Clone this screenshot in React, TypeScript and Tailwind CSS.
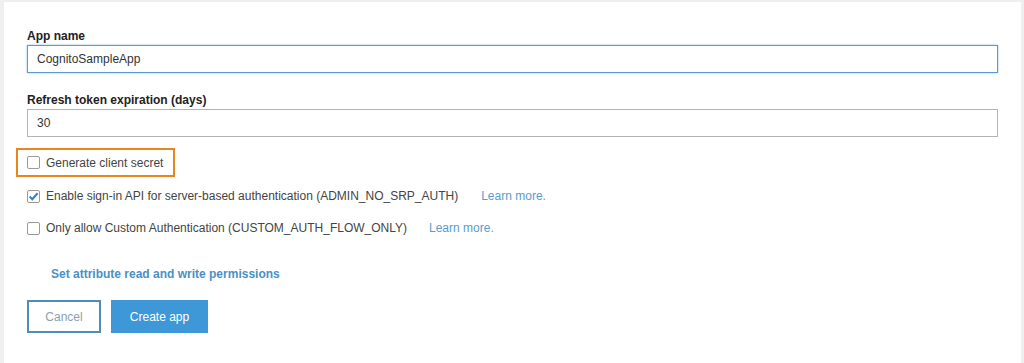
import { useState } from "react";

const font = "font-['Liberation_Sans',Arial,sans-serif]";

function Box({ checked }: { checked: boolean }) {
  return (
    <span className="flex h-[13px] w-[13px] shrink-0 items-center justify-center rounded-[2px] border border-[#9a9a9a] bg-white">
      {checked && (
        <svg width="11" height="11" viewBox="0 0 11 11" aria-hidden>
          <path d="M1.6 5.6 L4.3 8.2 L9.6 2.3" fill="none" stroke="#3b7fc4" strokeWidth="2.1" />
        </svg>
      )}
    </span>
  );
}

export default function App() {
  const [name, setName] = useState("CognitoSampleApp");
  const [days, setDays] = useState("30");

  return (
    <div className={`${font} h-[363px] w-full bg-[#efefef] pl-[4px] pr-[3px] pt-[2px]`}>
      <div className="h-full bg-white px-[23px] pt-[27px]">
        <label className="block text-[12px] font-bold leading-[14px] text-[#222]">App name</label>
        <input
          value={name}
          onChange={(e) => setName(e.target.value)}
          className="mt-[2px] block h-[28px] w-full border border-[#5b9bd5] px-[9px] text-[12px] text-[#333] shadow-[0_0_2px_#8fbfea] outline-none"
        />

        <label className="mt-[20px] block text-[12px] font-bold leading-[14px] text-[#222]">
          Refresh token expiration (days)
        </label>
        <input
          value={days}
          onChange={(e) => setDays(e.target.value)}
          className="mt-[2px] block h-[28px] w-full border border-[#b4b4b4] px-[9px] text-[12px] text-[#333] outline-none"
        />

        <div className="-ml-[11px] mt-[11px] flex h-[29px] w-[159px] items-center gap-[6px] border-2 border-[#e8861d] pl-[9px] text-[12px] text-[#444]">
          <Box checked={false} />
          <span>Generate client secret</span>
        </div>

        <div className="mt-[10px] flex h-[18px] items-center gap-[6px] text-[12px] text-[#444]">
          <Box checked />
          <span>Enable sign-in API for server-based authentication (ADMIN_NO_SRP_AUTH)</span>
          <a className="ml-[17px] text-[#5a9ccf]">Learn more.</a>
        </div>

        <div className="mt-[14px] flex h-[18px] items-center gap-[6px] text-[12px] text-[#444]">
          <Box checked={false} />
          <span>Only allow Custom Authentication (CUSTOM_AUTH_FLOW_ONLY)</span>
          <a className="ml-[16px] text-[#5a9ccf]">Learn more.</a>
        </div>

        <a className="ml-[24px] mt-[30px] block text-[12px] font-bold leading-[14px] text-[#4a90c6]">
          Set attribute read and write permissions
        </a>

        <div className="mt-[19px] flex gap-[10px]">
          <button className="h-[33px] w-[74px] border-2 border-[#4f8cbc] bg-white text-[12px] text-[#8aa0b4]">
            Cancel
          </button>
          <button className="h-[33px] w-[97px] bg-[#3e97d6] text-[12px] text-white">Create app</button>
        </div>
      </div>
    </div>
  );
}
